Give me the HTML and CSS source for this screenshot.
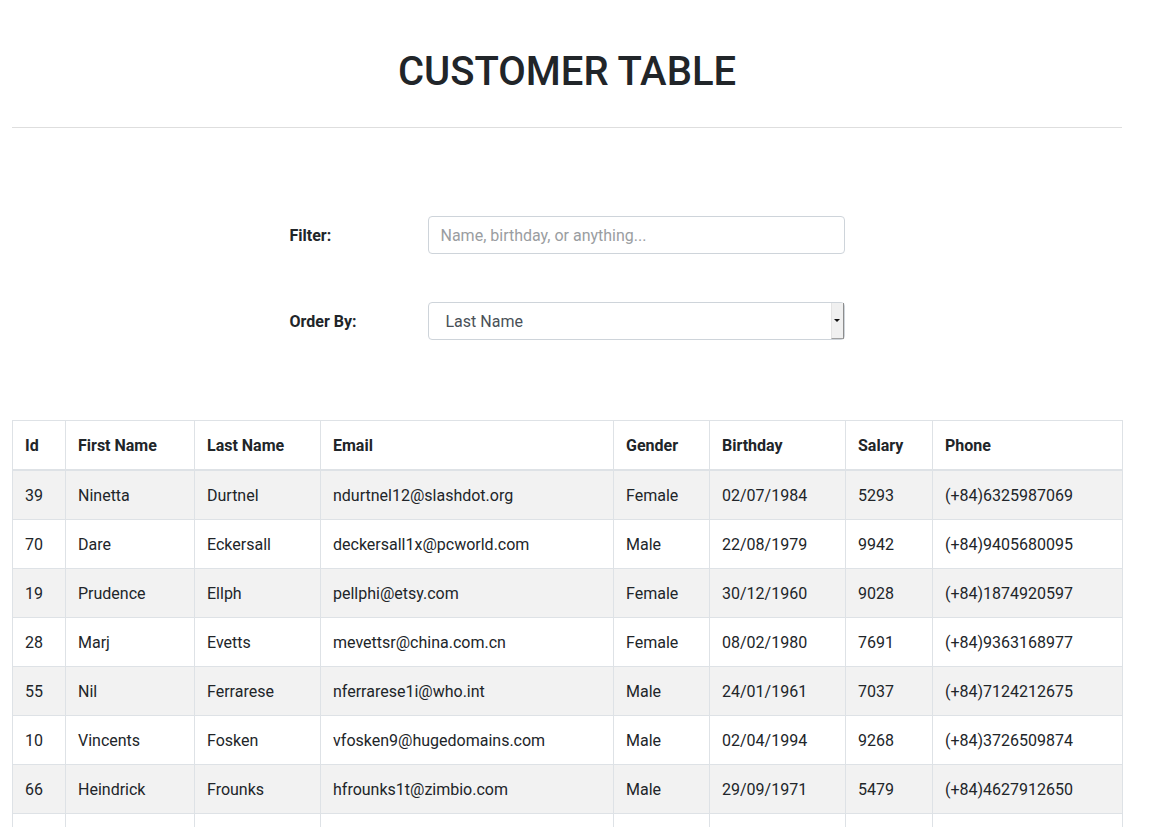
FILE: index.html
```html
<!DOCTYPE html>
<html lang="en">
<head>
<meta charset="utf-8">
<title>Customer Table</title>
<link rel="stylesheet" href="styles.css">
</head>
<body>
<div class="page">
  <h1 class="title">CUSTOMER TABLE</h1>
  <hr class="divider">
  <form class="controls">
    <div class="control-row">
      <label class="control-label" for="filter">Filter:</label>
      <input id="filter" class="control-input" type="text" placeholder="Name, birthday, or anything...">
    </div>
    <div class="control-row">
      <label class="control-label" for="order">Order By:</label>
      <div class="select-wrap">
        <select id="order" class="control-select">
          <option>Last Name</option>
          <option>First Name</option>
          <option>Id</option>
        </select>
        <span class="select-arrow"><span class="tri"></span></span>
      </div>
    </div>
  </form>
  <table class="customers">
    <colgroup>
      <col class="c-id"><col class="c-first"><col class="c-last"><col class="c-email">
      <col class="c-gender"><col class="c-birth"><col class="c-salary"><col class="c-phone">
    </colgroup>
    <thead>
      <tr><th>Id</th><th>First Name</th><th>Last Name</th><th>Email</th><th>Gender</th><th>Birthday</th><th>Salary</th><th>Phone</th></tr>
    </thead>
    <tbody>
      <tr><td>39</td><td>Ninetta</td><td>Durtnel</td><td>ndurtnel12@slashdot.org</td><td>Female</td><td>02/07/1984</td><td>5293</td><td>(+84)6325987069</td></tr>
      <tr><td>70</td><td>Dare</td><td>Eckersall</td><td>deckersall1x@pcworld.com</td><td>Male</td><td>22/08/1979</td><td>9942</td><td>(+84)9405680095</td></tr>
      <tr><td>19</td><td>Prudence</td><td>Ellph</td><td>pellphi@etsy.com</td><td>Female</td><td>30/12/1960</td><td>9028</td><td>(+84)1874920597</td></tr>
      <tr><td>28</td><td>Marj</td><td>Evetts</td><td>mevettsr@china.com.cn</td><td>Female</td><td>08/02/1980</td><td>7691</td><td>(+84)9363168977</td></tr>
      <tr><td>55</td><td>Nil</td><td>Ferrarese</td><td>nferrarese1i@who.int</td><td>Male</td><td>24/01/1961</td><td>7037</td><td>(+84)7124212675</td></tr>
      <tr><td>10</td><td>Vincents</td><td>Fosken</td><td>vfosken9@hugedomains.com</td><td>Male</td><td>02/04/1994</td><td>9268</td><td>(+84)3726509874</td></tr>
      <tr><td>66</td><td>Heindrick</td><td>Frounks</td><td>hfrounks1t@zimbio.com</td><td>Male</td><td>29/09/1971</td><td>5479</td><td>(+84)4627912650</td></tr>
      <tr><td>&nbsp;</td><td>&nbsp;</td><td>&nbsp;</td><td>&nbsp;</td><td>&nbsp;</td><td>&nbsp;</td><td>&nbsp;</td><td>&nbsp;</td></tr>
    </tbody>
  </table>
</div>
</body>
</html>
```
FILE: styles.css
```css
html {
  overflow: hidden;
}
body {
  margin: 0;
  font-family: Roboto, "Liberation Sans", sans-serif;
  font-size: 16px;
  line-height: 1.5;
  color: #212529;
  background: #fff;
}
.page {
  width: 1110px;
  margin-left: 12px;
  padding-top: 48px;
}
.title {
  margin: 0;
  text-align: center;
  font-size: 40px;
  font-weight: 500;
  line-height: 48px;
  color: #212529;
}
.divider {
  margin: 31px 0 0;
  border: 0;
  border-top: 1px solid #dedede;
  height: 0;
}
.controls {
  width: 555px;
  margin: 88px auto 0;
  display: flex;
  flex-direction: column;
  gap: 48px;
}
.control-row {
  display: flex;
  align-items: center;
}
.control-label {
  width: 138px;
  padding-top: 2px;
  font-weight: 700;
  font-size: 16px;
}
.control-input,
.control-select {
  box-sizing: border-box;
  width: 417px;
  height: 38px;
  border: 1px solid #ced4da;
  border-radius: 4px;
  font-family: Roboto, "Liberation Sans", sans-serif;
  font-size: 16px;
  color: #495057;
  background: #fff;
  margin: 0;
}
.control-input {
  padding: 6px 12px 6px;
  line-height: 26px;
}
.control-input::placeholder {
  color: #9a9da1;
}
.select-wrap {
  position: relative;
  width: 417px;
  height: 38px;
}
.control-select {
  appearance: none;
  -webkit-appearance: none;
  padding: 1px 30px 0 17px;
}
.select-arrow {
  position: absolute;
  right: 1px;
  top: 1px;
  width: 11px;
  height: 35px;
  background: #f0f0f0;
  border-right: 1px solid #8d8d8d;
  border-bottom: 1px solid #a0a0a0;
  border-left: 1px solid #e3e3e3;
  display: flex;
  align-items: center;
  justify-content: center;
  pointer-events: none;
}
.tri {
  width: 0;
  height: 0;
  border-left: 3px solid transparent;
  border-right: 3px solid transparent;
  border-top: 3px solid #111;
}
.customers {
  margin-top: 80px;
  width: 1110px;
  border-collapse: collapse;
  table-layout: fixed;
  border: 1px solid #dee2e6;
}
.c-id { width: 53px; }
.c-first { width: 129px; }
.c-last { width: 126px; }
.c-email { width: 293px; }
.c-gender { width: 96px; }
.c-birth { width: 136px; }
.c-salary { width: 87px; }
.c-phone { width: 190px; }
.customers th,
.customers td {
  padding: 13px 12px 11px;
  border: 1px solid #dee2e6;
  text-align: left;
  vertical-align: top;
  line-height: 24px;
  white-space: nowrap;
}
.customers th {
  font-weight: 700;
  border-bottom: 2px solid #dee2e6;
}
.customers tbody tr:nth-child(odd) {
  background: #f2f2f2;
}
```
